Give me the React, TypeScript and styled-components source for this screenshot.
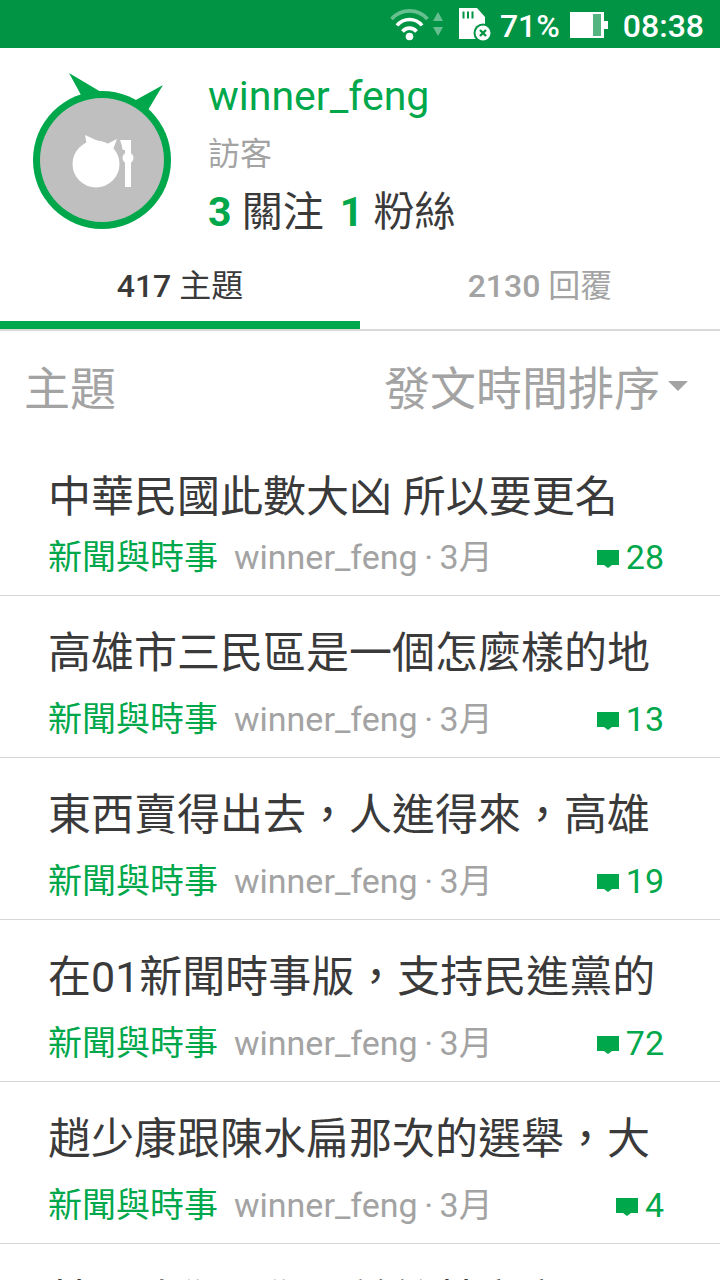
import React from "react";
import styled, { createGlobalStyle } from "styled-components";

const GREEN = "#00a84b";

const GlobalStyle = createGlobalStyle`
  *, *::before, *::after { box-sizing: border-box; }
  html, body, #root { height: 100%; }
  body {
    margin: 0;
    overflow: hidden;
    background: #fff;
    color: #3a3a3a;
    font-family: Roboto, "Noto Sans CJK TC", sans-serif;
  }
  a { color: inherit; text-decoration: none; }
  button, select { font: inherit; color: inherit; }
  h1, h2, h3, p, ul { margin: 0; padding: 0; font-weight: 400; }
`;

const Screen = styled.div`
  display: flex;
  flex-direction: column;
  height: 100%;
  overflow: hidden;
`;

const StatusBar = styled.header`
  display: flex;
  align-items: center;
  justify-content: flex-end;
  flex: none;
  height: 48px;
  padding: 0 16px 0 0;
  background: #009444;
  color: #fff;
  font-size: 32px;
  line-height: 40px;
  font-weight: 500;
`;

const StatusText = styled.span<{ $before: number }>`
  margin-left: ${(p) => p.$before}px;
  padding-top: 4px;
`;

const StatusIcon = styled.svg<{ $before: number }>`
  display: block;
  flex: none;
  margin-left: ${(p) => p.$before}px;
`;

const Profile = styled.section`
  display: flex;
  flex: none;
  padding: 20px 24px 0 24px;
  gap: 28px;
`;

const Avatar = styled.svg`
  display: block;
  flex: none;
`;

const ProfileText = styled.div`
  display: flex;
  flex-direction: column;
`;

const UserName = styled.h1`
  color: ${GREEN};
  font-size: 41px;
  line-height: 56px;
`;

const Role = styled.p`
  color: #a3a3a3;
  font-size: 32px;
  line-height: 60px;
`;

const Stats = styled.p`
  display: flex;
  gap: 16px;
  font-size: 41px;
  line-height: 56px;
`;

const StatCount = styled.b`
  color: ${GREEN};
  font-weight: 700;
`;

const Tabs = styled.nav`
  display: flex;
  flex: none;
  margin-top: 5px;
`;

const Tab = styled.button<{ $active?: boolean }>`
  flex: 1;
  height: 86px;
  padding: 0 0 2px;
  border: 0;
  border-bottom: 2px solid #dadada;
  background: ${(p) =>
    p.$active
      ? `linear-gradient(${GREEN}, ${GREEN}) bottom / 100% 8px no-repeat`
      : "none"};
  color: ${(p) => (p.$active ? "#3a3a3a" : "#a3a3a3")};
  font-size: 32px;
  line-height: 40px;
`;

const TabCount = styled.span`
  font-weight: 500;
`;

const Toolbar = styled.div`
  display: flex;
  align-items: center;
  justify-content: space-between;
  flex: none;
  height: 103px;
  padding: 12px 32px 0 24px;
  color: #a3a3a3;
  font-size: 46px;
`;

const ToolbarTitle = styled.h2`
  font-size: 46px;
  line-height: 64px;
`;

const SortLabel = styled.label`
  display: flex;
  align-items: center;
  gap: 8px;

  svg { margin-bottom: 6px; }
`;

const SortSelect = styled.select`
  appearance: none;
  margin: 0;
  padding: 0;
  border: 0;
  background: none;
  line-height: 64px;
`;

const TopicList = styled.ul`
  flex: none;
  list-style: none;
`;

const Topic = styled.li`
  display: flex;
  flex-direction: column;
  justify-content: flex-end;
  height: 162px;
  padding: 0 56px 10px 48px;
  border-bottom: 1px solid #d6d6d6;
`;

const TopicTitle = styled.a<{ $compact?: boolean }>`
  display: block;
  font-size: 43px;
  line-height: 64px;
  margin-bottom: ${(p) => (p.$compact ? 0 : 6)}px;
  white-space: nowrap;
`;

const Meta = styled.div`
  display: flex;
  align-items: center;
  color: #a3a3a3;
  font-size: 34px;
  line-height: 56px;
`;

const Category = styled.a`
  && { color: ${GREEN}; }
  margin-right: 16px;
`;

const Dot = styled.span`
  width: 22px;
  text-align: center;
`;

const Replies = styled.span`
  display: flex;
  align-items: center;
  gap: 7px;
  margin-left: auto;
  color: ${GREEN};

  svg { margin-top: 4px; }
`;

const topics = [
  { title: "中華民國此數大凶 所以要更名", replies: 28 },
  { title: "高雄市三民區是一個怎麼樣的地", replies: 13 },
  { title: "東西賣得出去，人進得來，高雄", replies: 19 },
  { title: "在01新聞時事版，支持民進黨的", replies: 72 },
  { title: "趙少康跟陳水扁那次的選舉，大", replies: 4 },
  { title: "其二政你一你一前給其文字", replies: 9 },
];

function DeviceStatus() {
  return (
    <StatusBar>
      <StatusIcon $before={0} width="54" height="34" viewBox="0 0 54 34" aria-label="Wi-Fi">
        <g fill="none" stroke="#fff" strokeWidth="3.600">
          <path d="M1.500 12A24 24 0 0 1 37.500 12" opacity=".4" />
          <path d="M7 18.500A16 16 0 0 1 32 18.500" />
          <path d="M12.500 24.500A9 9 0 0 1 26.500 24.500" />
        </g>
        <circle cx="19.500" cy="29.500" r="3.800" fill="#fff" />
        <path d="M43 14l5-9 5 9zM43 20h10l-5 9z" fill="#fff" opacity=".4" />
      </StatusIcon>
      <StatusIcon $before={14} width="34" height="34" viewBox="0 0 34 34" aria-label="SIM">
        <path d="M1 1h18l8 9v22H1z" fill="#fff" />
        <path d="M5.500 4.500v7M10 4.500v7M14.500 4.500v7" stroke="#009444" strokeWidth="2" />
        <circle cx="25" cy="26" r="9.500" fill="#009444" />
        <circle cx="25" cy="26" r="7.500" fill="#fff" />
        <path d="M22 23l6 6M28 23l-6 6" stroke="#009444" strokeWidth="2.400" />
      </StatusIcon>
      <StatusText $before={8}>71%</StatusText>
      <StatusIcon $before={9} width="40" height="28" viewBox="0 0 40 28" aria-label="Battery">
        <path d="M1 2h34v9h4v8h-4v9H1z" fill="#fff" />
        <path d="M24 4h8v22h-8z" fill="#54b580" />
      </StatusIcon>
      <StatusText $before={14}>08:38</StatusText>
    </StatusBar>
  );
}

function UserAvatar() {
  return (
    <Avatar width="156" height="164" viewBox="0 0 156 164" role="img" aria-label="winner_feng">
      <g fill={GREEN}>
        <path d="M45 5L77 24L74 32L56 32L57 27z" />
        <path d="M139 17L110 33L118 46L124 42z" />
        <circle cx="78" cy="92" r="69" />
      </g>
      <circle cx="78" cy="92" r="62" fill="#bfbfbf" />
      <g fill="#fff">
        <circle cx="72" cy="96" r="23.500" />
        <path d="M61 67L74 73L68 80L63 78zM93 71L81 77L88 84z" />
        <path d="M96 72h11v47h-6V82h-1c-2 0-2-2-2-4z" />
        <circle cx="104" cy="90" r="5.500" />
      </g>
    </Avatar>
  );
}

export default function App() {
  return (
    <Screen>
      <GlobalStyle />
      <DeviceStatus />
      <Profile>
        <UserAvatar />
        <ProfileText>
          <UserName>winner_feng</UserName>
          <Role>訪客</Role>
          <Stats>
            <span><StatCount>3</StatCount> 關注</span>
            <span><StatCount>1</StatCount> 粉絲</span>
          </Stats>
        </ProfileText>
      </Profile>
      <Tabs>
        <Tab $active><TabCount>417</TabCount> 主題</Tab>
        <Tab><TabCount>2130</TabCount> 回覆</Tab>
      </Tabs>
      <Toolbar>
        <ToolbarTitle>主題</ToolbarTitle>
        <SortLabel>
          <SortSelect aria-label="發文時間排序">
            <option>發文時間排序</option>
          </SortSelect>
          <svg width="20" height="10" viewBox="0 0 20 10" aria-hidden="true">
            <path d="M0 0h20L10 10z" fill="#a3a3a3" />
          </svg>
        </SortLabel>
      </Toolbar>
      <TopicList>
        {topics.map((t, i) => (
          <Topic key={t.title}>
            <TopicTitle href="#" $compact={i === 0}>{t.title}</TopicTitle>
            <Meta>
              <Category href="#">新聞與時事</Category>
              <span>winner_feng</span>
              <Dot>·</Dot>
              <span>3月</span>
              <Replies>
                <svg width="22" height="18" viewBox="0 0 22 18" aria-hidden="true">
                  <path d="M0 0h22v15h-7l-4 3-4-3H0z" fill={GREEN} />
                </svg>
                {t.replies}
              </Replies>
            </Meta>
          </Topic>
        ))}
      </TopicList>
    </Screen>
  );
}
